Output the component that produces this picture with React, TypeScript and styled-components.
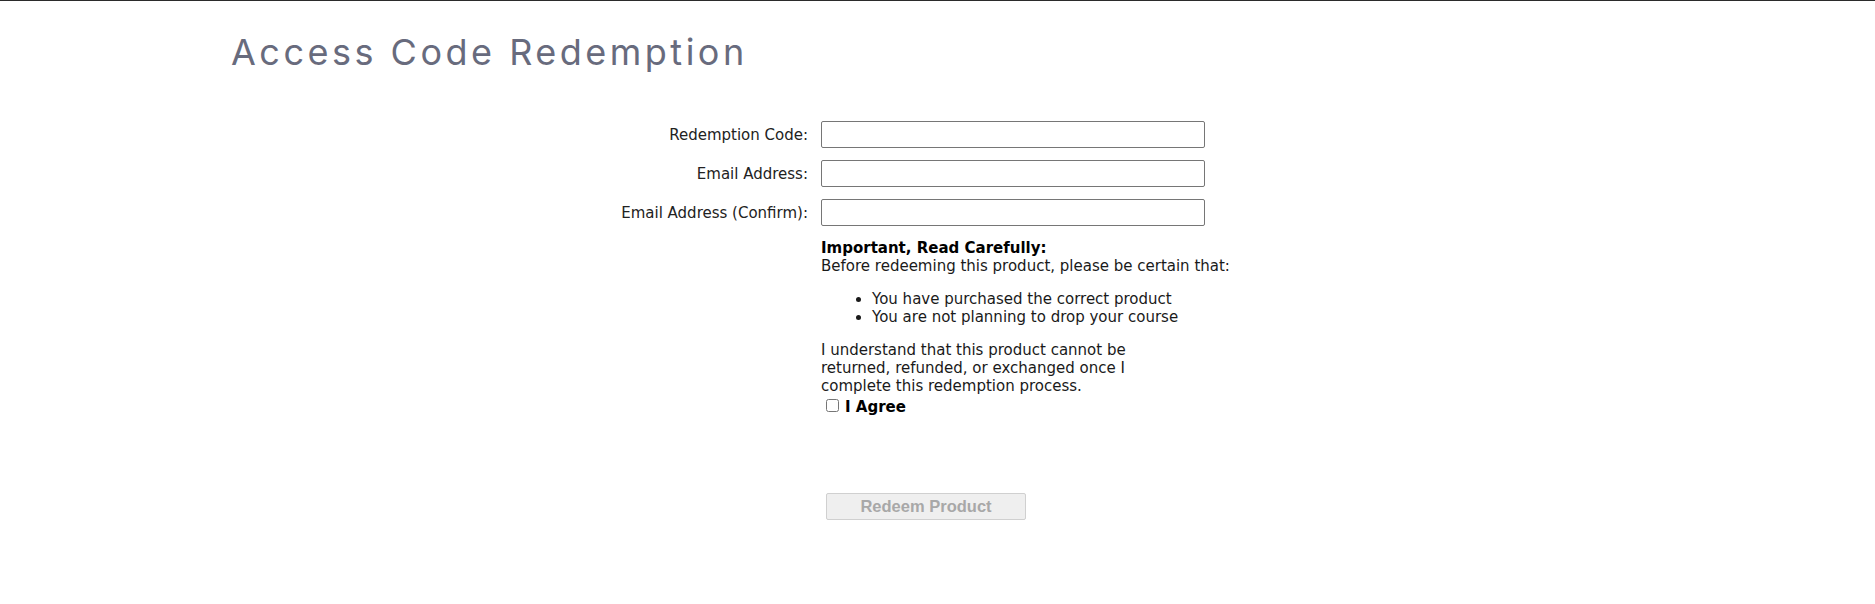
import React, { useState } from 'react';
import styled, { createGlobalStyle } from 'styled-components';

const GlobalStyle = createGlobalStyle`
  html, body { margin: 0; padding: 0; background: #fff; }
  body { border-top: 1px solid #2b2b2b; font-family: Verdana, "DejaVu Sans", sans-serif; }
`;

// --- Styled Components ---
const Page = styled.div` padding: 0 0 80px 231px; `;
const Title = styled.h1` margin: 0; padding-top: 28px; font-family: Inter, "Open Sans", sans-serif; font-weight: 400; font-size: 36px; line-height: 46px; color: #686b7d; letter-spacing: 3.5px; `;
const Form = styled.form` display: grid; grid-template-columns: 577px 384px; column-gap: 13px; row-gap: 12px; margin-top: 46px; align-items: center; `;
const Label = styled.label` text-align: right; font-size: 15px; color: #222; `;
const TextInput = styled.input` box-sizing: border-box; width: 384px; height: 27px; margin: 0; border: 1px solid #767676; border-radius: 2px; padding: 2px 6px; font: inherit; font-size: 15px; `;
const Notice = styled.div` grid-column: 2; font-size: 15px; line-height: 18px; color: #1a1a1a; margin-top: 1px; `;
const NoticeHead = styled.div` font-weight: 700; color: #000; white-space: nowrap; `;
const Line = styled.div` white-space: nowrap; `;
const Bullets = styled.ul` margin: 15px 0 15px; padding-left: 51px; white-space: nowrap; `;
const Terms = styled.p` margin: 0; width: 320px; `;
const AgreeRow = styled.label` display: flex; align-items: center; height: 18px; margin-top: 3px; font-weight: 700; color: #000; font-size: 15px; `;
const Check = styled.input` width: 13px; height: 13px; margin: 0 6px 4px 5px; `;
const Actions = styled.div` grid-column: 2; padding: 65px 0 0 5px; `;
const RedeemButton = styled.button` width: 200px; height: 27px; border: 1px solid #d0d0d0; border-radius: 2px; background: #efefef; color: #a8a8a8; font-family: "Liberation Sans", Arial, sans-serif; font-weight: 700; font-size: 16.5px; padding: 0; `;

const fields = [
  { id: 'code', label: 'Redemption Code:' },
  { id: 'email', label: 'Email Address:' },
  { id: 'confirm', label: 'Email Address (Confirm):' },
];

const App = () => {
  const [agreed, setAgreed] = useState(false);

  return (
    <>
      <GlobalStyle />
      <Page>
        <Title>Access Code Redemption</Title>
        <Form onSubmit={(e) => e.preventDefault()}>
          {fields.map((f) => (
            <React.Fragment key={f.id}>
              <Label htmlFor={f.id}>{f.label}</Label>
              <TextInput id={f.id} type="text" />
            </React.Fragment>
          ))}
          <Notice>
            <NoticeHead>Important, Read Carefully:</NoticeHead>
            <Line>Before redeeming this product, please be certain that:</Line>
            <Bullets>
              <li>You have purchased the correct product</li>
              <li>You are not planning to drop your course</li>
            </Bullets>
            <Terms>
              I understand that this product cannot be returned, refunded, or exchanged once I complete this redemption process.
            </Terms>
            <AgreeRow>
              <Check type="checkbox" checked={agreed} onChange={(e) => setAgreed(e.target.checked)} />
              I Agree
            </AgreeRow>
          </Notice>
          <Actions>
            <RedeemButton type="submit" disabled={!agreed}>Redeem Product</RedeemButton>
          </Actions>
        </Form>
      </Page>
    </>
  );
};

export default App;
